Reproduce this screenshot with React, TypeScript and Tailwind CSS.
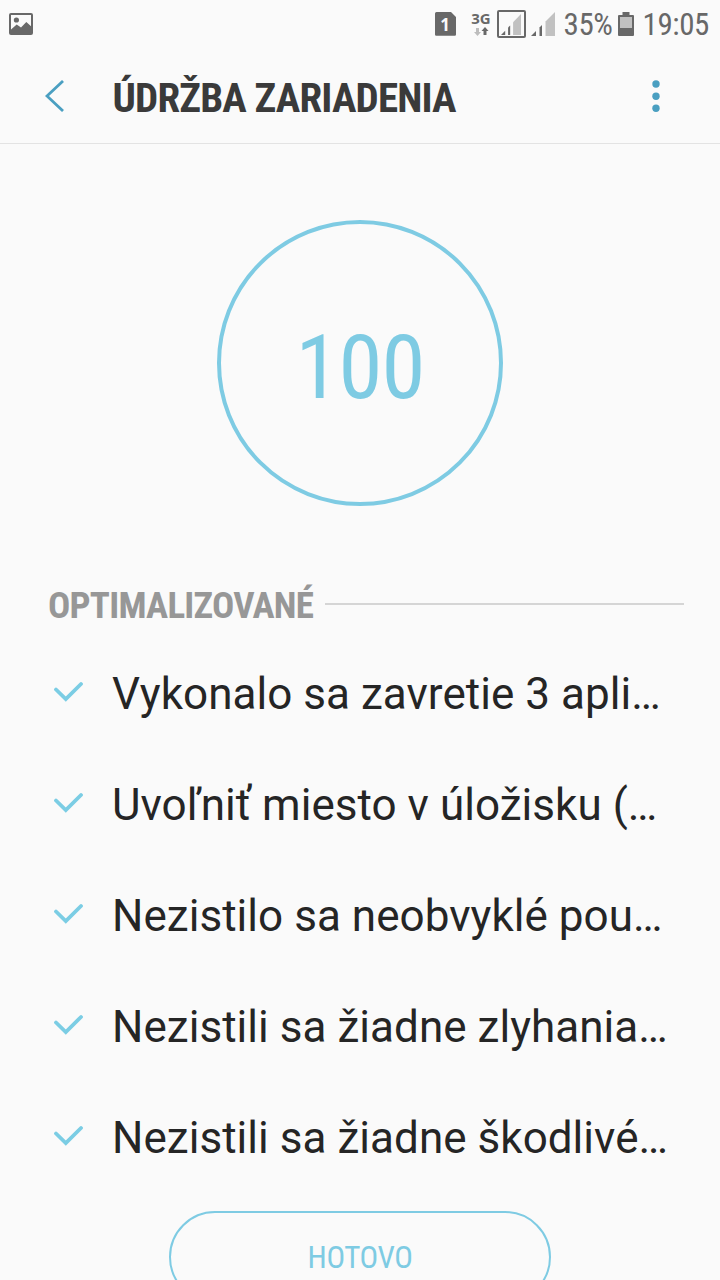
import { clsx } from "clsx"

const condensed = "font-['Roboto_Condensed','Roboto',sans-serif] [font-stretch:75%]"

const results = [
  "Vykonalo sa zavretie 3 apli…",
  "Uvoľniť miesto v úložisku (…",
  "Nezistilo sa neobvyklé pou…",
  "Nezistili sa žiadne zlyhania…",
  "Nezistili sa žiadne škodlivé…",
]

function PictureIcon() {
  return (
    <svg width="24" height="22" viewBox="0 0 24 22" className="shrink-0">
      <rect x="1" y="1" width="22" height="20" rx="1" fill="none" stroke="#686868" strokeWidth="2" />
      <circle cx="7.4" cy="7" r="2.6" fill="#686868" />
      <path d="M2 16.500l5.700-5 4.300 3 5.300-5.500 5 4.500V21H2z" fill="#686868" />
    </svg>
  )
}

function SimIcon() {
  return (
    <div className="relative flex h-6 w-[21px] items-center justify-center">
      <svg width="21" height="24" viewBox="0 0 21 24" className="absolute inset-0">
        <path d="M1.500 0H16l5 5v17.500a1.200 1.200 0 0 1-1.200 1.200H1.200A1.200 1.200 0 0 1 0 22.500V1.500A1.500 1.500 0 0 1 1.500 0z" fill="#686868" />
      </svg>
      <span className="relative font-['Open_Sans',sans-serif] text-[17px] leading-none font-bold text-[#fafafa]">1</span>
    </div>
  )
}

function NetworkType() {
  return (
    <div className="ml-4 flex w-[19px] flex-col items-center">
      <span className="font-['Open_Sans',sans-serif] text-[15px] leading-[15px] font-bold text-[#686868]">3G</span>
      <svg width="16" height="10" viewBox="0 0 16 10" className="mt-px">
        <path d="M3 1h3v4h2l-3.500 4L1 5h2z" fill="#bdbdbd" />
        <path d="M10.500 8h3V4h2L12 0 8.500 4h2z" fill="#686868" />
      </svg>
    </div>
  )
}

function Signal({ className }: { className?: string }) {
  return (
    <svg viewBox="0 0 24 24" preserveAspectRatio="none" className={className}>
      <path d="M0 24l5-5v5z" fill="#686868" />
      <path d="M8.500 15.500l2.500-2.500v11H8.500z" fill="#686868" />
      <path d="M14.500 9.500L24 0v24h-9.500z" fill="#c1c1c1" />
    </svg>
  )
}

function BatteryIcon() {
  return (
    <svg width="16" height="24" viewBox="0 0 16 24" className="ml-[5px]">
      <path d="M4.500 0h7v3H15a1 1 0 0 1 1 1v19a1 1 0 0 1-1 1H1a1 1 0 0 1-1-1V4a1 1 0 0 1 1-1h3.500z" fill="#686868" />
      <rect x="2" y="5" width="12" height="11" fill="#c1c1c1" />
    </svg>
  )
}

function StatusBar() {
  return (
    <div className="flex h-12 items-center pr-[11px] pl-[9px]">
      <PictureIcon />
      <div className="ml-auto flex items-center">
        <SimIcon />
        <NetworkType />
        <div className="ml-[6px] flex h-[28px] w-[29px] items-center justify-center rounded-[2px] border-2 border-[#686868]">
          <Signal className="h-[21px] w-5" />
        </div>
        <Signal className="ml-[5px] h-6 w-6" />
        <span className={clsx(condensed, "ml-[9px] pt-px text-[31px] leading-none tracking-[-0.4px] text-[#686868]")}>35%</span>
        <BatteryIcon />
        <span className={clsx(condensed, "ml-[9px] pt-px text-[31px] leading-none tracking-[-0.4px] text-[#686868]")}>19:05</span>
      </div>
    </div>
  )
}

function Header() {
  return (
    <header className="flex h-24 items-center border-b border-[#e3e3e3] pl-[45px]">
      <button aria-label="Späť">
        <svg width="20" height="32" viewBox="0 0 20 32" fill="none">
          <path d="M18 1L2 16l16 15" stroke="#4a9fc1" strokeWidth="2.800" />
        </svg>
      </button>
      <h1 className={clsx(condensed, "ml-[47.500px] pt-[5px] text-[41px] leading-none font-bold tracking-[-0.83px] text-[#3a3a3a]")}>
        ÚDRŽBA ZARIADENIA
      </h1>
      <button aria-label="Ďalšie možnosti" className="mr-[60px] ml-auto">
        <svg width="8" height="32" viewBox="0 0 8 32" fill="#4a9fc1">
          <circle cx="4" cy="4" r="3.700" />
          <circle cx="4" cy="16.200" r="3.700" />
          <circle cx="4" cy="28.300" r="3.700" />
        </svg>
      </button>
    </header>
  )
}

function CheckIcon() {
  return (
    <svg width="30" height="22" viewBox="0 0 30 22" fill="none" className="mb-[5px] shrink-0">
      <path d="M3 9.500L12.800 19 28 4" stroke="#7bcde4" strokeWidth="3.800" strokeLinecap="round" />
    </svg>
  )
}

export default function App() {
  return (
    <div className="h-[1280px] w-[720px] overflow-hidden bg-[#fafafa] font-['Roboto',sans-serif]">
      <StatusBar />
      <Header />

      <div className="mx-auto mt-[76px] flex size-[286px] items-center justify-center rounded-full border-4 border-[#7ecbe3]">
        <span className={clsx(condensed, "pt-2 text-[89px] leading-none tracking-[-1px] text-[#7ecbe3]")}>100</span>
      </div>

      <div className="mt-[64px] mr-9 ml-12 flex h-[68px] items-center">
        <h2 className={clsx(condensed, "pt-[3px] text-[37px] leading-none font-bold tracking-[-0.75px] text-[#979797]")}>
          OPTIMALIZOVANÉ
        </h2>
        <div className="ml-3 h-[2px] flex-1 bg-[#d5d5d5]" />
      </div>

      <ul>
        {results.map((text) => (
          <li key={text} className="flex h-[111px] items-center pl-[53px]">
            <CheckIcon />
            <span className="ml-[29px] text-[44px] leading-none tracking-[0.04px] whitespace-nowrap text-[#252525]">{text}</span>
          </li>
        ))}
      </ul>

      <button
        className={clsx(
          condensed,
          "mx-auto mt-[18px] flex h-[92px] w-[382px] items-center justify-center rounded-full border-2 border-[#7ecbe3] text-[31px] leading-none tracking-[-0.4px] text-[#7ecbe3]"
        )}
      >
        HOTOVO
      </button>
    </div>
  )
}
